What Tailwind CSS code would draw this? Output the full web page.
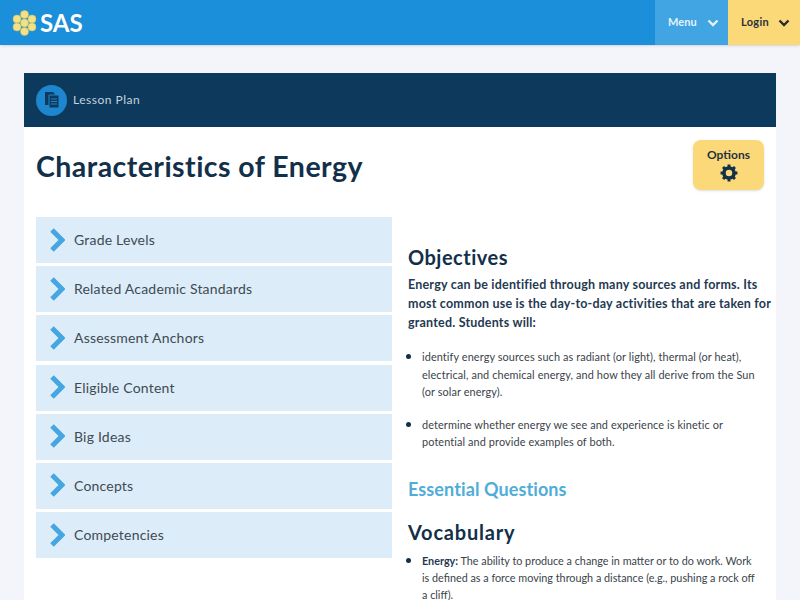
<!DOCTYPE html>
<html lang="en">
<head>
    <meta charset="UTF-8">
    <title>Characteristics of Energy</title>
    <script src="https://cdn.jsdelivr.net/npm/@tailwindcss/browser@4"></script>
</head>
<body class="bg-[#f3f5fa] font-['Lato',sans-serif] h-[600px] overflow-hidden">
    <!-- top bar -->
    <header class="h-[45px] bg-[#1b8fd9] flex items-stretch shadow-sm">
        <div class="flex items-center pl-3 gap-[3px]">
            <svg width="25" height="26" viewBox="0 0 25 26">
                <g fill="#f6df84" stroke="#b9c86a" stroke-width="0.6">
                    <circle cx="12.5" cy="4.5" r="4"/>
                    <circle cx="5" cy="9" r="4"/>
                    <circle cx="20" cy="9" r="4"/>
                    <circle cx="12.5" cy="13" r="4"/>
                    <circle cx="5" cy="17" r="4"/>
                    <circle cx="20" cy="17" r="4"/>
                    <circle cx="12.5" cy="21.5" r="4"/>
                </g>
            </svg>
            <span class="text-white font-bold text-[24px] leading-none">SAS</span>
        </div>
        <div class="ml-auto w-[73px] bg-[#41a5e4] flex items-center pl-[13px] gap-[10px]">
            <span class="text-[#e4f2fb] font-bold text-[11px] tracking-[0.1px]">Menu</span>
            <svg width="12" height="8" viewBox="0 0 12 8"><path d="M1.5 1.5L6 6L10.5 1.5" fill="none" stroke="#e4f2fb" stroke-width="2.4"/></svg>
        </div>
        <div class="w-[72px] bg-[#fbd978] flex items-center pl-[13px] gap-[9px]">
            <span class="text-[#2b3138] font-bold text-[11px] tracking-[0.3px]">Login</span>
            <svg width="12" height="8" viewBox="0 0 12 8"><path d="M1.5 1.5L6 6L10.5 1.5" fill="none" stroke="#2b2b2b" stroke-width="2.4"/></svg>
        </div>
    </header>

    <main class="mx-[24px] mt-[28px] bg-white h-[527px] overflow-hidden">
        <div class="h-[54px] bg-[#0d3a5c] flex items-center pl-3 gap-[6px]">
            <div class="w-[31px] h-[31px] rounded-full bg-[#1d86cf] flex items-center justify-center">
                <svg width="16" height="18" viewBox="0 0 16 18">
                    <path d="M1 1h8l2 2v11H1z" fill="#0d3a5c"/>
                    <path d="M5 4h10v13H5z" fill="#0d3a5c" stroke="#1d86cf" stroke-width="1"/>
                    <path d="M7 8h6M7 10.500h6M7 13h6" stroke="#1d86cf" stroke-width="1"/>
                </svg>
            </div>
            <span class="text-[#c3d3df] text-[12px] tracking-[0.5px]">Lesson Plan</span>
        </div>

        <div class="relative px-3">
            <h1 class="pt-[21px] text-[28.500px] leading-[36px] font-bold text-[#12304a] tracking-[0.45px]">Characteristics of Energy</h1>
            <button class="absolute right-3 top-[13px] w-[71px] h-[50px] rounded-lg bg-[#fbd978] shadow-sm flex flex-col items-center pt-2">
                <span class="text-[#1f3140] font-bold text-[12px] leading-[14px]">Options</span>
                <svg width="18" height="18" viewBox="0 0 16 16" class="mt-[2px]">
                    <circle cx="8" cy="8" r="4.500" fill="none" stroke="#12304a" stroke-width="3.200"/>
                    <path d="M8 0.500v3M8 12.500v3M0.500 8h3M12.500 8h3M2.700 2.700l2.100 2.100M11.200 11.200l2.100 2.100M13.300 2.700l-2.100 2.100M4.800 11.200l-2.100 2.100" stroke="#12304a" stroke-width="2.600"/>
                </svg>
            </button>

            <div class="flex mt-[33px] gap-[16px]">
                <ul class="w-[356px] shrink-0 flex flex-col gap-[3.200px]">
                    <li class="h-[46px] bg-[#dcedf9] flex items-center pl-[13px] pb-[1px] gap-[9px] text-[14px] tracking-[0.2px] text-[#3f4a52]"><svg width="16" height="26" viewBox="0 0 16 26"><path d="M3 3L13 13L3 23" fill="none" stroke="#45a6e2" stroke-width="5"/></svg>Grade Levels</li>
                    <li class="h-[46px] bg-[#dcedf9] flex items-center pl-[13px] pb-[1px] gap-[9px] text-[14px] tracking-[0.2px] text-[#3f4a52]"><svg width="16" height="26" viewBox="0 0 16 26"><path d="M3 3L13 13L3 23" fill="none" stroke="#45a6e2" stroke-width="5"/></svg>Related Academic Standards</li>
                    <li class="h-[46px] bg-[#dcedf9] flex items-center pl-[13px] pb-[1px] gap-[9px] text-[14px] tracking-[0.2px] text-[#3f4a52]"><svg width="16" height="26" viewBox="0 0 16 26"><path d="M3 3L13 13L3 23" fill="none" stroke="#45a6e2" stroke-width="5"/></svg>Assessment Anchors</li>
                    <li class="h-[46px] bg-[#dcedf9] flex items-center pl-[13px] pb-[1px] gap-[9px] text-[14px] tracking-[0.2px] text-[#3f4a52]"><svg width="16" height="26" viewBox="0 0 16 26"><path d="M3 3L13 13L3 23" fill="none" stroke="#45a6e2" stroke-width="5"/></svg>Eligible Content</li>
                    <li class="h-[46px] bg-[#dcedf9] flex items-center pl-[13px] pb-[1px] gap-[9px] text-[14px] tracking-[0.2px] text-[#3f4a52]"><svg width="16" height="26" viewBox="0 0 16 26"><path d="M3 3L13 13L3 23" fill="none" stroke="#45a6e2" stroke-width="5"/></svg>Big Ideas</li>
                    <li class="h-[46px] bg-[#dcedf9] flex items-center pl-[13px] pb-[1px] gap-[9px] text-[14px] tracking-[0.2px] text-[#3f4a52]"><svg width="16" height="26" viewBox="0 0 16 26"><path d="M3 3L13 13L3 23" fill="none" stroke="#45a6e2" stroke-width="5"/></svg>Concepts</li>
                    <li class="h-[46px] bg-[#dcedf9] flex items-center pl-[13px] pb-[1px] gap-[9px] text-[14px] tracking-[0.2px] text-[#3f4a52]"><svg width="16" height="26" viewBox="0 0 16 26"><path d="M3 3L13 13L3 23" fill="none" stroke="#45a6e2" stroke-width="5"/></svg>Competencies</li>
                </ul>

                <div class="w-[364px] shrink-0 pt-[26px] text-[#3a434a]">
                    <h2 class="text-[20px] leading-[28px] font-bold text-[#12304a] tracking-[0.5px]">Objectives</h2>
                    <p class="mt-[5px] text-[12.500px] leading-[18.800px] font-bold text-[#1f3a52] tracking-[0.2px]">Energy can be identified through many sources and forms. Its<br>most common use is the day-to-day activities that are taken for<br>granted. Students will:</p>
                    <ul class="mt-[15px] list-disc pl-[14px] text-[10.900px] tracking-[0.1px] leading-[17.500px] marker:text-[#12304a] marker:text-[14px]">
                        <li>identify energy sources such as radiant (or light), thermal (or heat),<br>electrical, and chemical energy, and how they all derive from the Sun<br>(or solar energy).</li>
                        <li class="mt-[14px]">determine whether energy we see and experience is kinetic or<br>potential and provide examples of both.</li>
                    </ul>
                    <h3 class="mt-[25px] text-[18px] leading-[26px] font-bold text-[#4fadd8] tracking-[0.1px]">Essential Questions</h3>
                    <h2 class="mt-[16px] text-[20px] leading-[28px] font-bold text-[#12304a] tracking-[0.8px]">Vocabulary</h2>
                    <ul class="mt-[5px] list-disc pl-[14px] text-[10.800px] leading-[17px] marker:text-[#12304a] marker:text-[14px]">
                        <li><b class="text-[#1f3a52]">Energy:</b> The ability to produce a change in matter or to do work. Work<br>is defined as a force moving through a distance (e.g., pushing a rock off<br>a cliff).</li>
                    </ul>
                </div>
            </div>
        </div>
    </main>
</body>
</html>
